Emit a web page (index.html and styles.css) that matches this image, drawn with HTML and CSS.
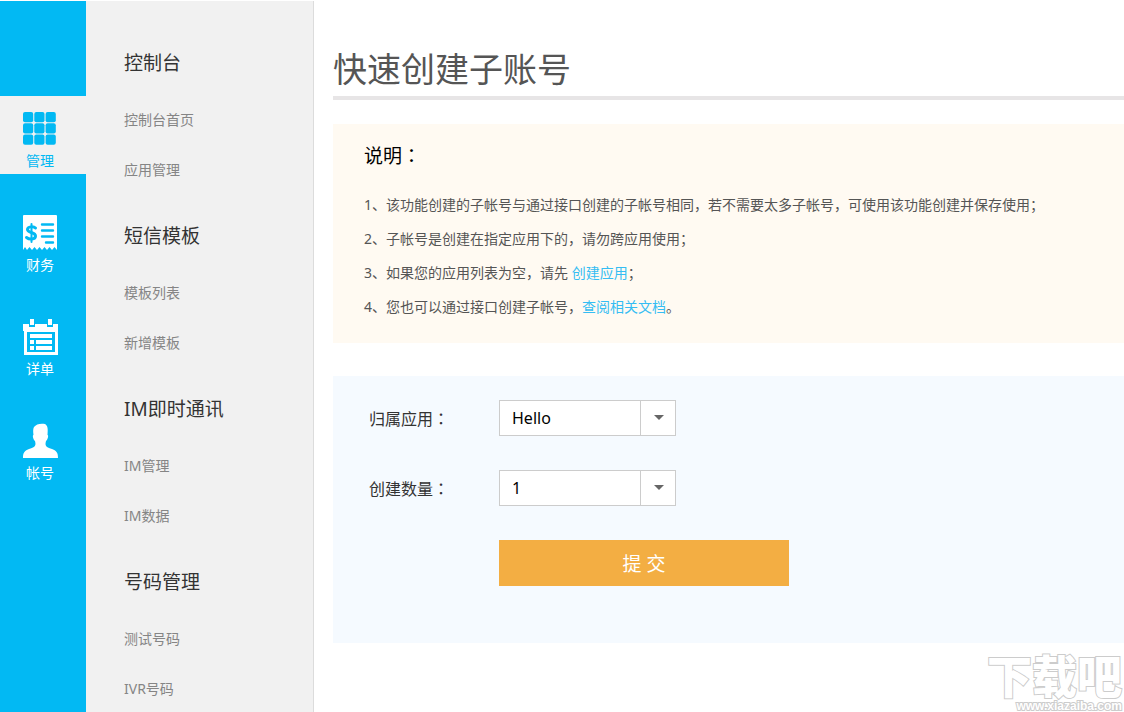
FILE: index.html
```html
<!DOCTYPE html>
<html lang="zh-CN">
<head>
<meta charset="utf-8">
<title>快速创建子账号</title>
<link rel="stylesheet" href="styles.css">
</head>
<body>
<div class="page">
  <nav class="rail">
    <a class="rail-item active" href="#">
      <svg class="rail-icon" viewBox="0 0 36 36" fill="currentColor"><rect x="1" y="1" width="10.200" height="10.200" rx="2"/><rect x="12.300" y="1" width="10.200" height="10.200" rx="2"/><rect x="23.600" y="1" width="10.200" height="10.200" rx="2"/><rect x="1" y="12.300" width="10.200" height="10.200" rx="2"/><rect x="12.300" y="12.300" width="10.200" height="10.200" rx="2"/><rect x="23.600" y="12.300" width="10.200" height="10.200" rx="2"/><rect x="1" y="23.600" width="10.200" height="10.200" rx="2"/><rect x="12.300" y="23.600" width="10.200" height="10.200" rx="2"/><rect x="23.600" y="23.600" width="10.200" height="10.200" rx="2"/></svg>
      <span>管理</span>
    </a>
    <a class="rail-item" href="#">
      <svg class="rail-icon" viewBox="0 0 36 36"><path fill="#fff" d="M2 0H34Q35 0 35 1V35L32.500 32L30 35L27.500 32L25 35L22.500 32L20 35L17.500 32L15 35L12.500 32L10 35L7.500 32L5 35L3 32L1 35V1Q1 0 2 0Z"/><g fill="none" stroke="#02b9f3" stroke-width="2.400" stroke-linecap="round"><path d="M20 9.500H31M20 15.500H31M20 21.500H31M24 27.500H31"/><path stroke-width="3" d="M13.500 13C12 11.500 5.500 11 5.500 14.500C5.500 18 13.500 17 13.500 21C13.500 25 7 24.500 4.500 22.500"/><path stroke-width="2" d="M9.500 9V27"/></g></svg>
      <span>财务</span>
    </a>
    <a class="rail-item" href="#">
      <svg class="rail-icon" viewBox="0 0 36 36"><path fill="#fff" d="M1 5H7V8H13V5H25V8H31V5H36V12H1ZM8 0H12V6H8ZM26 0H30V6H26Z"/><path fill="#fff" fill-rule="evenodd" d="M2 12H36V36H2ZM5 13V33H33V13Z"/><path fill="#fff" d="M8 15H30V19H8ZM8 21H12V25H8ZM14 21H30V25H14ZM8 27H12V31H8ZM14 27H30V31H14Z"/></svg>
      <span>详单</span>
    </a>
    <a class="rail-item" href="#">
      <svg class="rail-icon" viewBox="0 0 36 36"><path fill="#fff" d="M12 4C14 1 19 0 23 1C26 3 26 6 25.500 12C27 12 25.500 17 24 18C23 22 23 24 30 26C35 28 36 30 36 35H1C1 30 2 28 7 26C14 24 14 22 13 18C11.500 17 10 12 11.500 12C11 8 11 6 12 4Z"/></svg>
      <span>帐号</span>
    </a>
  </nav>
  <aside class="menu">
    <section><h2>控制台</h2><a href="#">控制台首页</a><a href="#">应用管理</a></section>
    <section><h2>短信模板</h2><a href="#">模板列表</a><a href="#">新增模板</a></section>
    <section><h2>IM即时通讯</h2><a href="#">IM管理</a><a href="#">IM数据</a></section>
    <section><h2>号码管理</h2><a href="#">测试号码</a><a href="#">IVR号码</a></section>
  </aside>
  <main class="main">
    <h1>快速创建子账号</h1>
    <section class="notes">
      <h3>说明<span class="colon" lang="zh-TW">：</span></h3>
      <p>1、该功能创建的子帐号与通过接口创建的子帐号相同，若不需要太多子帐号，可使用该功能创建并保存使用；</p>
      <p>2、子帐号是创建在指定应用下的，请勿跨应用使用；</p>
      <p>3、如果您的应用列表为空，请先 <a href="#">创建应用</a>；</p>
      <p>4、您也可以通过接口创建子帐号，<a href="#">查阅相关文档</a>。</p>
    </section>
    <form class="form">
      <div class="row">
        <label for="app">归属应用<span class="colon" lang="zh-TW">：</span></label>
        <div class="select"><select id="app"><option>Hello</option></select></div>
      </div>
      <div class="row">
        <label for="count">创建数量<span class="colon" lang="zh-TW">：</span></label>
        <div class="select"><select id="count"><option>1</option></select></div>
      </div>
      <button type="button">提 交</button>
    </form>
  </main>
  <div class="watermark"><strong>下载吧</strong><span>www.xiazaiba.com</span></div>
</div>
</body>
</html>
```

FILE: styles.css
```css
* { box-sizing: border-box; }

body {
  margin: 0;
  background: #fff;
  color: #555;
  font: 14px "Noto Sans", "Noto Sans CJK SC", sans-serif;
}

a { text-decoration: none; }
h1, h2, h3, p { margin: 0; font-weight: 400; }

.page {
  position: relative;
  display: flex;
  height: 100vh;
  padding-top: 1px;
  overflow: hidden;
}

.rail {
  display: flex;
  flex: none;
  flex-direction: column;
  gap: 26px;
  width: 86px;
  padding-top: 95px;
  background: #02b9f3;
}

.rail-item {
  display: flex;
  flex-direction: column;
  align-items: center;
  gap: 4px;
  height: 78px;
  padding: 15px 6px 0 0;
  color: #fff;
  line-height: 20px;
}

.rail-item.active { background: #f1f1f1; color: #02b9f3; }
.rail-icon { width: 36px; height: 36px; }

.menu {
  flex: none;
  width: 228px;
  padding: 21px 0 0 38px;
  border-right: 1px solid #dcdcdc;
  background: #f1f1f1;
}

.menu h2 {
  padding-top: 9px;
  color: #333;
  font-size: 19px;
  line-height: 64px;
}

.menu a { display: block; color: #858585; line-height: 50px; }

.main { flex: 1; min-width: 0; padding: 41px 0 0 19px; }

.main h1 {
  border-bottom: 4px solid #e7e5e6;
  font-size: 34px;
  line-height: 54px;
}

.notes { margin-top: 24px; padding: 0 31px 19px; background: #fffaf2; }
.notes h3 { color: #000; font-size: 19px; line-height: 64px; }
.notes p { line-height: 34px; }
.notes a { color: #35bdf3; }
.colon { font-family: "Noto Sans CJK TC", sans-serif; line-height: 1; }

.form {
  display: flex;
  flex-direction: column;
  gap: 34px;
  margin-top: 33px;
  padding: 24px 36px 57px;
  background: #f5faff;
}

.row { display: flex; align-items: center; color: #333; font-size: 16px; }
.row label { width: 130px; }
.select { position: relative; width: 177px; }

.select select {
  display: block;
  width: 100%;
  height: 36px;
  padding: 0 48px 0 12px;
  border: 1px solid #ccc;
  border-radius: 0;
  background: #fff;
  color: #000;
  font: inherit;
  appearance: none;
}

.select::before,
.select::after {
  content: "";
  position: absolute;
  pointer-events: none;
}

.select::before { top: 0; right: 35px; bottom: 0; width: 1px; background: #ccc; }

.select::after {
  top: 15px;
  right: 12px;
  border: 5px solid transparent;
  border-top-color: #666;
  border-bottom: 0;
}

.form button {
  width: 290px;
  height: 46px;
  margin-left: 130px;
  border: 0;
  background: #f3ae43;
  color: #fff;
  font: inherit;
  font-size: 19px;
}

.watermark {
  position: absolute;
  right: 2px;
  bottom: 0;
  display: flex;
  flex-direction: column;
  align-items: flex-end;
  color: #fff;
  -webkit-text-stroke: 2px #ccc;
  paint-order: stroke fill;
}

.watermark strong { font-size: 45px; font-weight: 900; line-height: 46px; }
.watermark span {
  color: #fff;
  font: bold 12px/12px "Liberation Sans", sans-serif;
}
```
